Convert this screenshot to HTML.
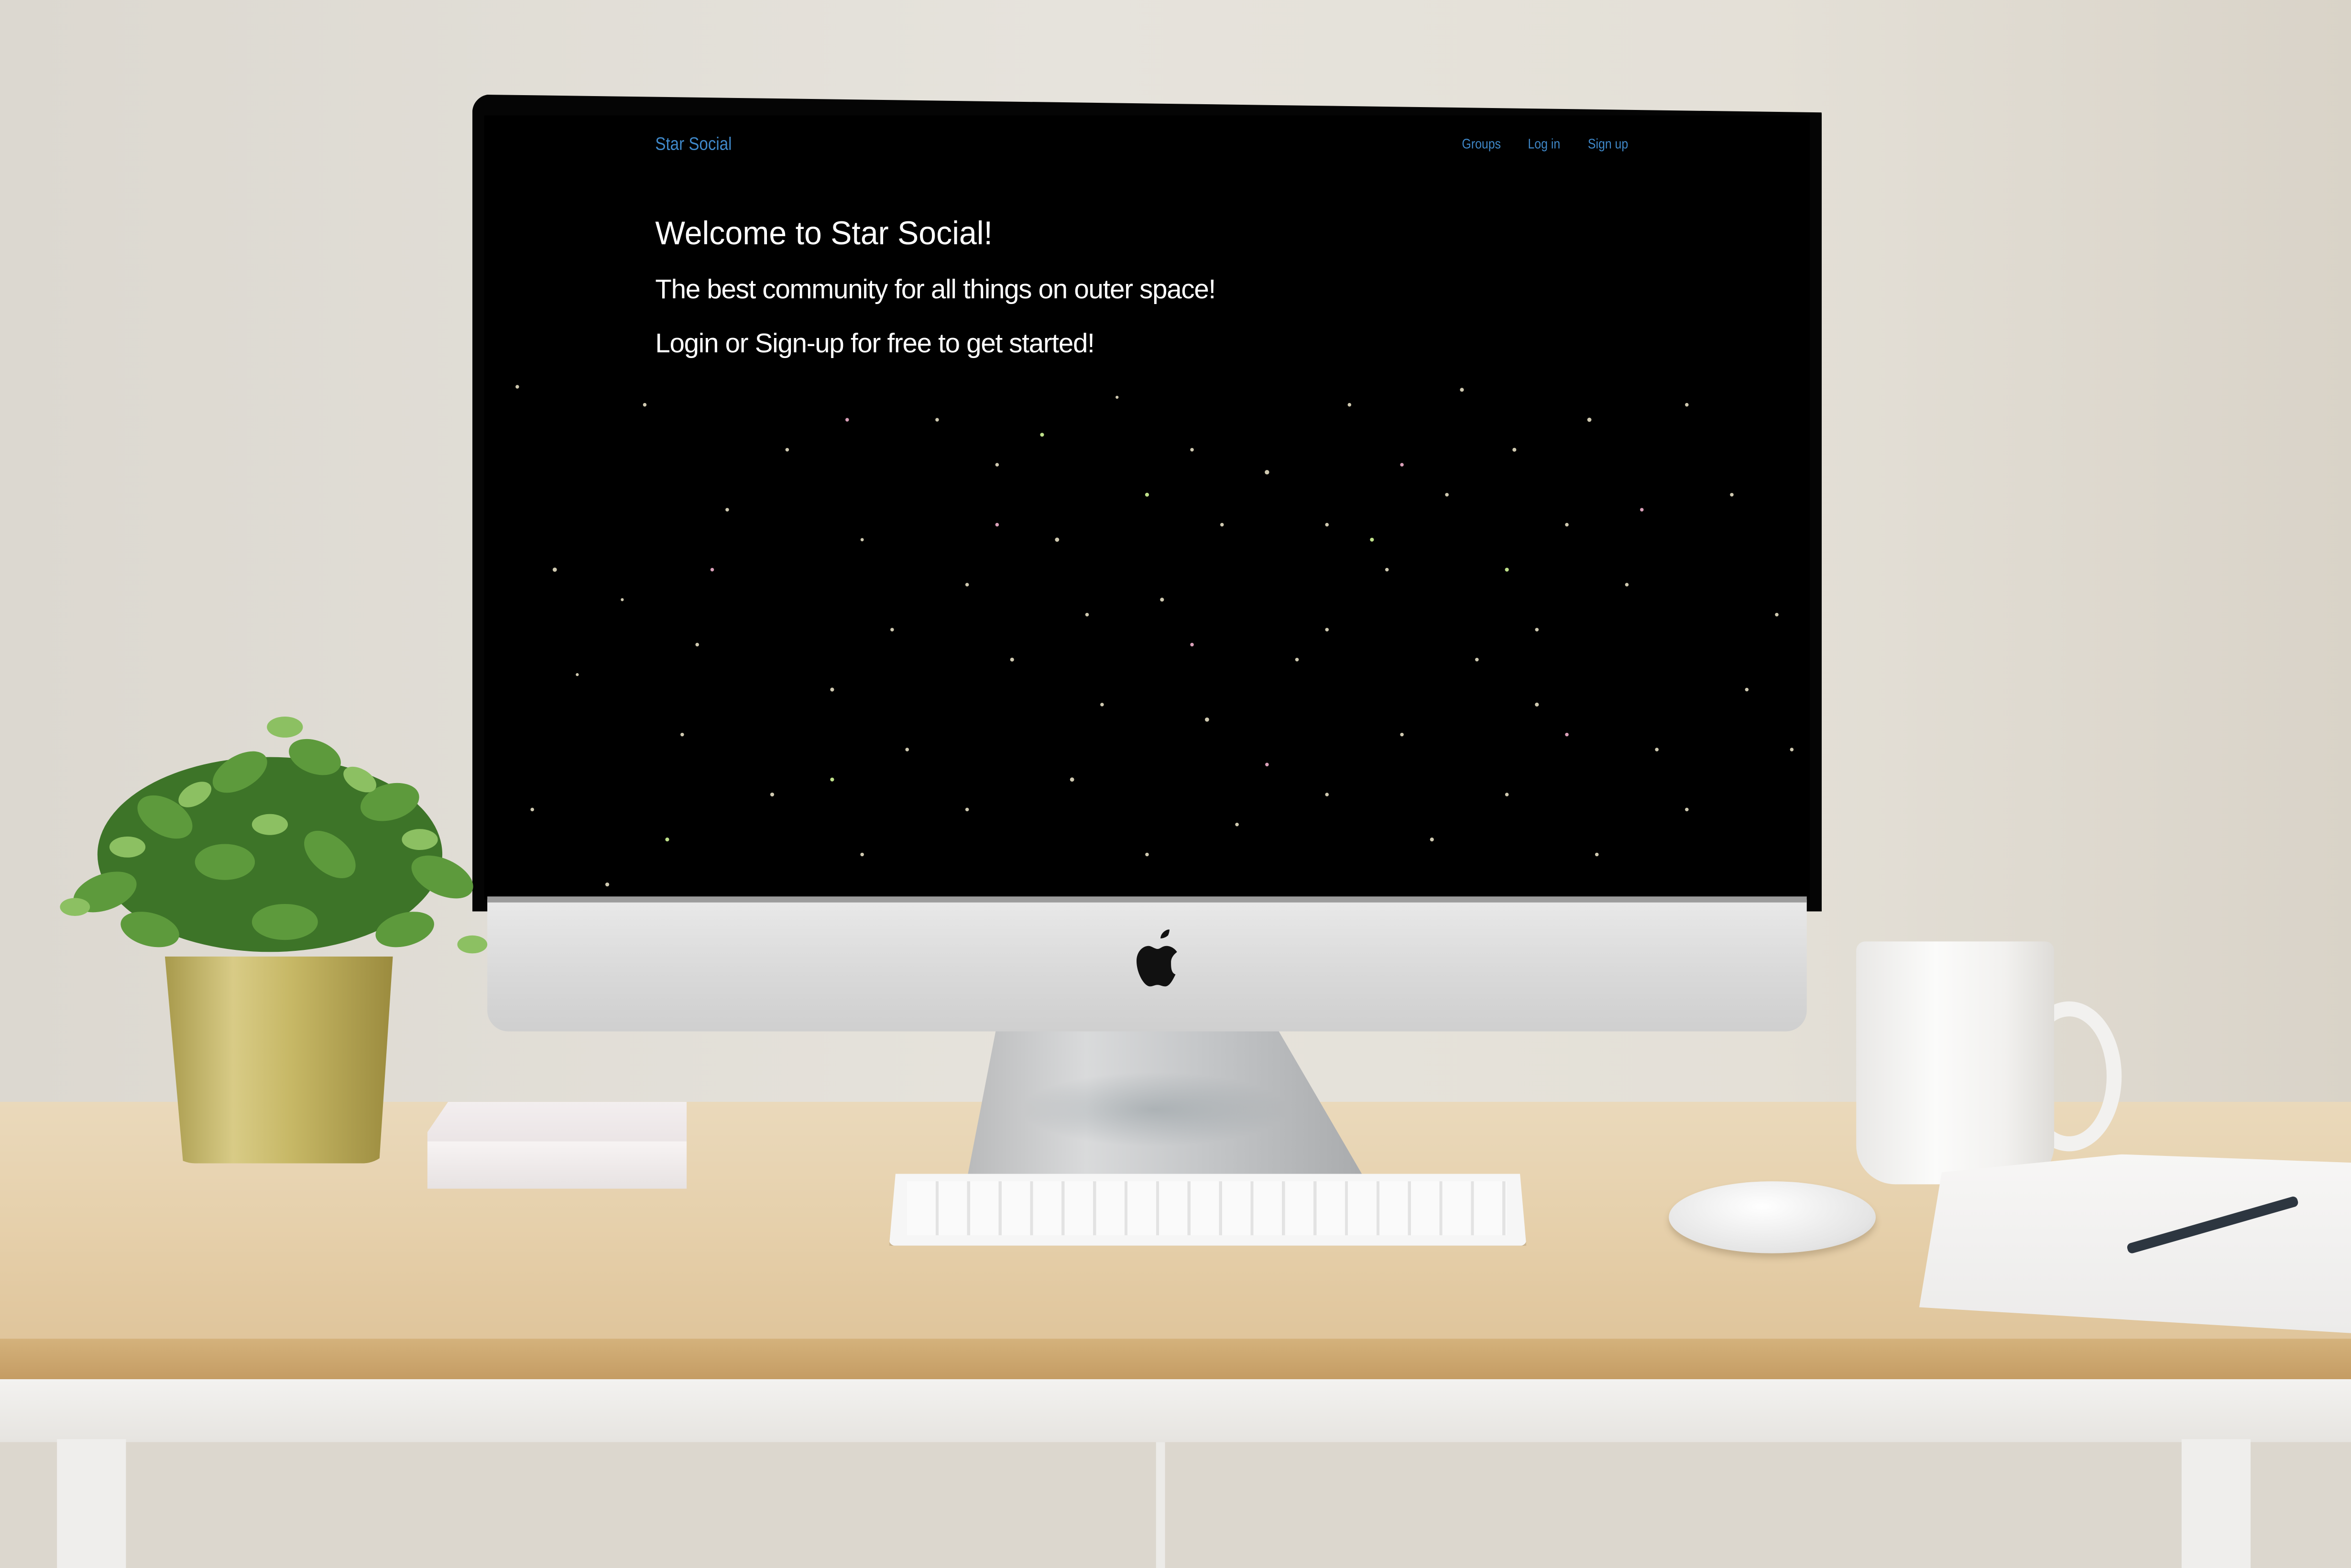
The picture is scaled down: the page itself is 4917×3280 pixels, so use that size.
<!DOCTYPE html>
<html><head><meta charset="utf-8"><style>
html,body{margin:0;padding:0;width:4917px;height:3278px;overflow:hidden;background:#e2ded6;}
#w{position:absolute;left:0;top:0;width:1568px;height:1046px;transform:scale(3.1359);transform-origin:0 0;font-family:"Liberation Sans",sans-serif;
background:linear-gradient(90deg,#dcd8d0 0%,#e6e3dc 45%,#e4e0d7 75%,#d9d3c8 100%);overflow:hidden}
.a{position:absolute}
.t{transform-origin:0 0;white-space:nowrap}
.lf{position:absolute;border-radius:50% 0 50% 0;}
</style></head><body><div id="w">
<!-- desk -->
<div class="a" style="left:0;top:735px;width:1568px;height:165px;background:linear-gradient(180deg,#ead9bb 0%,#e6d0ab 50%,#dfc49a 100%)"></div>
<div class="a" style="left:0;top:893px;width:1568px;height:28px;background:linear-gradient(180deg,#d4b27c,#c49b62)"></div>
<div class="a" style="left:0;top:920px;width:1568px;height:42px;background:linear-gradient(180deg,#f3f2f0,#e6e4e0)"></div>
<div class="a" style="left:0;top:962px;width:1568px;height:84px;background:#dcd7ce"></div>
<div class="a" style="left:38px;top:960px;width:46px;height:86px;background:#efeeec"></div>
<div class="a" style="left:1455px;top:960px;width:46px;height:86px;background:#efeeec"></div>
<div class="a" style="left:771px;top:962px;width:6px;height:84px;background:#ecebe8"></div>
<!-- stand -->
<div class="a" style="left:645px;top:683px;width:265px;height:103px;background:linear-gradient(90deg,#b9babb,#d9dadb 30%,#c4c6c8 60%,#a9abad);clip-path:polygon(20px 0,205px 0,265px 100%,0 100%)"></div>
<div class="a" style="left:680px;top:715px;width:180px;height:50px;border-radius:50%;background:radial-gradient(ellipse,rgba(140,150,155,.5),rgba(140,150,155,0) 70%)"></div>
<!-- monitor bezel -->
<div class="a" style="left:315px;top:63px;width:900px;height:545px;background:#050505;border-radius:12px 14px 0 0;clip-path:polygon(0 0,100% 12px,100% 100%,0 100%)"></div>
<div class="a" style="left:323px;top:77px;width:884px;height:523px;background:#000"></div>
<!-- chin -->
<div class="a" style="left:325px;top:600px;width:880px;height:88px;background:linear-gradient(180deg,#e9e9e9,#d8d8d8 60%,#cfcfcf);border-radius:0 0 14px 14px"></div>
<div class="a" style="left:325px;top:598px;width:880px;height:4px;background:#9c9c9c"></div>
<svg class="a" style="left:755px;top:620px" width="36" height="42" viewBox="0 0 36 42"><path d="M24 4c1-2 1-4 1-4-3 0-6 3-6 6 2 0 4-1 5-2zM26 22c0-4 3-6 4-7-2-3-5-4-7-4-3 0-4 2-6 2s-4-2-6-2c-4 0-8 4-8 10 0 8 5 17 9 17 2 0 3-1 5-1s3 1 5 1c3 0 5-4 7-8-3-1-3-5-3-8z" fill="#111"/></svg>
<!-- screen text -->
<div class="a t" style="left:437px;top:89px;font-size:12px;color:#3f88c9;transform:scaleX(.88)">Star Social</div>
<div class="a t" style="left:975px;top:91px;font-size:9px;color:#3f88c9;transform:scaleX(.88)">Groups</div>
<div class="a t" style="left:1019px;top:91px;font-size:9px;color:#3f88c9;transform:scaleX(.88)">Log in</div>
<div class="a t" style="left:1059px;top:91px;font-size:9px;color:#3f88c9;transform:scaleX(.88)">Sign up</div>
<div class="a t" style="left:437px;top:143px;font-size:22px;color:#fff;transform:scaleX(.96)">Welcome to Star Social!</div>
<div class="a t" style="left:437px;top:183px;font-size:18px;color:#fff;letter-spacing:-0.4px">The best community for all things on outer space!</div>
<div class="a t" style="left:437px;top:219px;font-size:18px;color:#fff;letter-spacing:-0.4px">Login or Sign-up for free to get started!</div>
<svg class="a" style="left:325px;top:240px" width="880" height="360">
<g fill="#cfc9b0">
<circle cx="20" cy="18" r="1.2"/><circle cx="105" cy="30" r="1.2"/><circle cx="160" cy="100" r="1.2"/><circle cx="45" cy="140" r="1.4"/><circle cx="90" cy="160" r="1"/><circle cx="230" cy="220" r="1.3"/><circle cx="300" cy="40" r="1.2"/><circle cx="340" cy="70" r="1.2"/><circle cx="380" cy="120" r="1.4"/><circle cx="420" cy="25" r="1"/><circle cx="450" cy="160" r="1.3"/><circle cx="520" cy="75" r="1.5"/><circle cx="575" cy="30" r="1.2"/><circle cx="600" cy="140" r="1.2"/><circle cx="650" cy="20" r="1.3"/><circle cx="685" cy="60" r="1.3"/><circle cx="720" cy="110" r="1.2"/><circle cx="760" cy="150" r="1.2"/><circle cx="800" cy="30" r="1.2"/><circle cx="830" cy="90" r="1.2"/><circle cx="860" cy="170" r="1.2"/><circle cx="270" cy="180" r="1.2"/><circle cx="350" cy="200" r="1.3"/><circle cx="410" cy="230" r="1.2"/><circle cx="480" cy="240" r="1.4"/><circle cx="540" cy="200" r="1.2"/><circle cx="610" cy="250" r="1.2"/><circle cx="700" cy="230" r="1.3"/><circle cx="780" cy="260" r="1.2"/><circle cx="840" cy="220" r="1.2"/><circle cx="30" cy="300" r="1.2"/><circle cx="80" cy="350" r="1.3"/><circle cx="130" cy="250" r="1.2"/><circle cx="190" cy="290" r="1.3"/><circle cx="250" cy="330" r="1.2"/><circle cx="320" cy="300" r="1.2"/><circle cx="390" cy="280" r="1.4"/><circle cx="440" cy="330" r="1.2"/><circle cx="500" cy="310" r="1.2"/><circle cx="560" cy="290" r="1.2"/><circle cx="630" cy="320" r="1.3"/><circle cx="680" cy="290" r="1.2"/><circle cx="740" cy="330" r="1.2"/><circle cx="800" cy="300" r="1.2"/><circle cx="870" cy="260" r="1.2"/><circle cx="60" cy="210" r="1"/><circle cx="140" cy="190" r="1.2"/><circle cx="200" cy="60" r="1.2"/><circle cx="250" cy="120" r="1.1"/><circle cx="490" cy="110" r="1.2"/><circle cx="560" cy="180" r="1.2"/><circle cx="640" cy="90" r="1.2"/><circle cx="700" cy="180" r="1.2"/><circle cx="320" cy="150" r="1.2"/><circle cx="470" cy="60" r="1.2"/><circle cx="735" cy="40" r="1.4"/><circle cx="560" cy="110" r="1.2"/><circle cx="400" cy="170" r="1.2"/><circle cx="280" cy="260" r="1.2"/><circle cx="660" cy="200" r="1.2"/>
</g>
<g fill="#d9a0b8"><circle cx="340" cy="110" r="1.2"/><circle cx="610" cy="70" r="1.2"/><circle cx="150" cy="140" r="1.2"/><circle cx="470" cy="190" r="1.2"/><circle cx="720" cy="250" r="1.2"/><circle cx="240" cy="40" r="1.2"/><circle cx="770" cy="100" r="1.2"/><circle cx="520" cy="270" r="1.2"/></g>
<g fill="#bfe08a"><circle cx="370" cy="50" r="1.3"/><circle cx="230" cy="280" r="1.3"/><circle cx="590" cy="120" r="1.3"/><circle cx="440" cy="90" r="1.3"/><circle cx="680" cy="140" r="1.3"/><circle cx="120" cy="320" r="1.3"/></g>
</svg>
<!-- plant -->
<div class="a" style="left:110px;top:638px;width:152px;height:138px;background:linear-gradient(90deg,#a89a4c,#d8cb86 30%,#c7b866 55%,#9b8b3e);clip-path:polygon(0 0,100% 0,94% 100%,8% 100%);border-radius:0 0 20px 20px"></div>
<svg class="a" style="left:30px;top:455px" width="300" height="195" viewBox="0 0 300 195">
<ellipse cx="150" cy="115" rx="115" ry="65" fill="#3d7428"/>
<g fill="#5d9a3c">
<ellipse cx="40" cy="140" rx="22" ry="12" transform="rotate(-20 40 140)"/><ellipse cx="80" cy="90" rx="20" ry="12" transform="rotate(30 80 90)"/><ellipse cx="130" cy="60" rx="20" ry="11" transform="rotate(-30 130 60)"/><ellipse cx="180" cy="50" rx="18" ry="11" transform="rotate(20 180 50)"/><ellipse cx="230" cy="80" rx="20" ry="12" transform="rotate(-15 230 80)"/><ellipse cx="265" cy="130" rx="22" ry="12" transform="rotate(25 265 130)"/><ellipse cx="120" cy="120" rx="20" ry="12"/><ellipse cx="190" cy="115" rx="20" ry="12" transform="rotate(40 190 115)"/><ellipse cx="160" cy="160" rx="22" ry="12"/><ellipse cx="70" cy="165" rx="20" ry="11" transform="rotate(15 70 165)"/><ellipse cx="240" cy="165" rx="20" ry="11" transform="rotate(-15 240 165)"/>
</g>
<g fill="#8cc062">
<ellipse cx="100" cy="75" rx="12" ry="7" transform="rotate(-30 100 75)"/><ellipse cx="160" cy="30" rx="12" ry="7"/><ellipse cx="210" cy="65" rx="12" ry="7" transform="rotate(30 210 65)"/><ellipse cx="55" cy="110" rx="12" ry="7"/><ellipse cx="250" cy="105" rx="12" ry="7"/><ellipse cx="150" cy="95" rx="12" ry="7"/>
<ellipse cx="20" cy="150" rx="10" ry="6"/><ellipse cx="285" cy="175" rx="10" ry="6"/>
</g>
</svg>
<!-- notepad -->
<div class="a" style="left:285px;top:735px;width:173px;height:58px;background:linear-gradient(180deg,#f3eeef 0%,#ebe5e6 45%,#f7f3f3 46%,#e7e2e2 100%);clip-path:polygon(8% 0,100% 0,100% 100%,0 100%,0 35%)"></div>
<!-- keyboard -->
<div class="a" style="left:593px;top:783px;width:425px;height:48px;background:#f6f6f6;border-radius:4px;box-shadow:0 3px 3px rgba(120,100,70,.35);clip-path:polygon(1% 0,99% 0,100% 100%,0 100%)"></div>
<div class="a" style="left:605px;top:788px;width:400px;height:36px;background:repeating-linear-gradient(90deg,#fdfdfd 0 19px,#d8d8d8 19px 21px),#fff;opacity:.6"></div>
<!-- mouse -->
<div class="a" style="left:1113px;top:788px;width:138px;height:48px;border-radius:50%;background:radial-gradient(ellipse at 45% 35%,#fff,#e4e4e4 70%,#c9c9c9);box-shadow:0 3px 4px rgba(120,100,70,.3)"></div>
<!-- mug -->
<div class="a" style="left:1345px;top:668px;width:70px;height:100px;border:10px solid #f2f1ef;border-radius:50%;box-sizing:border-box"></div>
<div class="a" style="left:1238px;top:628px;width:132px;height:162px;background:linear-gradient(90deg,#e9e8e6,#fbfbfa 40%,#f2f1ef 75%,#dedcd8);border-radius:6px 6px 26px 26px"></div>
<!-- notebook -->
<div class="a" style="left:1280px;top:770px;width:300px;height:120px;background:linear-gradient(180deg,#f7f6f5,#ecebea);clip-path:polygon(5% 10%,45% 0,100% 5%,100% 100%,0 85%);"></div>
<div class="a" style="left:1418px;top:830px;width:118px;height:7px;background:#2d3640;transform:rotate(-16deg);transform-origin:0 0;border-radius:3px"></div>
</div></body></html>
